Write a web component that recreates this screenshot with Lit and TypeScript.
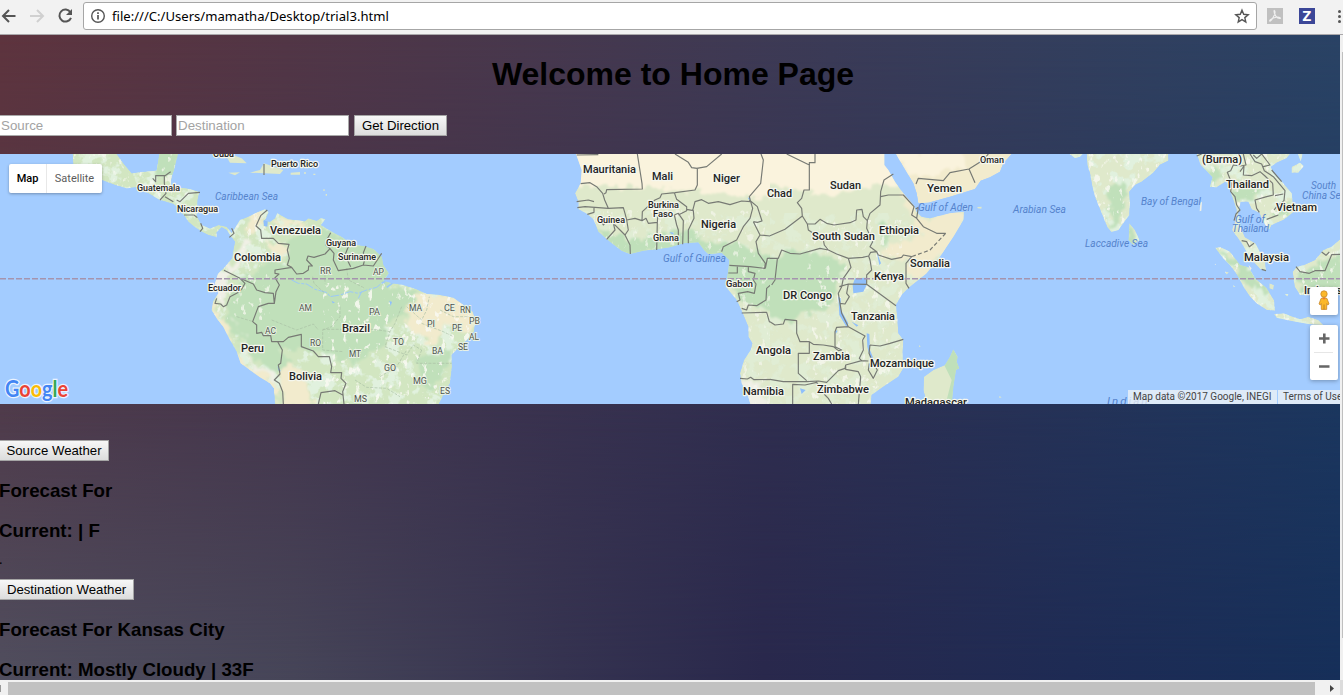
import { LitElement, html, svg, css } from "lit";
import { customElement } from "lit/decorators.js";

type Kind = "country" | "state" | "sea";
// text, left, right, baseline, font size, kind
type Label = [string, number, number, number, number, Kind];

const LABELS: Label[] = [
  ["Cuba", 213, 234, 157, 10, "country"],
  ["Puerto Rico", 271, 318, 167, 9.5, "country"],
  ["Guatemala", 137, 180, 190.5, 9.5, "country"],
  ["Nicaragua", 177, 218, 211.5, 9.5, "country"],
  ["Caribbean Sea", 215, 278, 199.5, 10, "sea"],
  ["Venezuela", 270, 321, 234, 11, "country"],
  ["Guyana", 326, 356, 245.5, 9.5, "country"],
  ["Suriname", 338, 376, 259.5, 9.5, "country"],
  ["Colombia", 234, 281, 261, 11, "country"],
  ["Ecuador", 208, 241, 290.5, 9.5, "country"],
  ["Peru", 241, 264, 352, 11, "country"],
  ["Brazil", 342, 370, 332, 11, "country"],
  ["Bolivia", 289, 322, 380, 11, "country"],
  ["RR", 320, 331, 273.5, 9, "state"],
  ["AP", 373, 384, 274.5, 9, "state"],
  ["AM", 299, 312, 310.500, 9, "state"],
  ["PA", 369, 380, 314.500, 9, "state"],
  ["MA", 409, 422, 310.500, 9, "state"],
  ["CE", 444, 455, 310.500, 9, "state"],
  ["RN", 460, 471, 312.500, 9, "state"],
  ["PI", 427, 435, 326.500, 9, "state"],
  ["PB", 469, 480, 323.500, 9, "state"],
  ["PE", 452, 462, 330.500, 9, "state"],
  ["AL", 469, 479, 339.500, 9, "state"],
  ["SE", 458, 468, 349.500, 9, "state"],
  ["AC", 265, 276, 333.500, 9, "state"],
  ["RO", 310, 321, 345.500, 9, "state"],
  ["MT", 349, 361, 356.500, 9, "state"],
  ["TO", 393, 404, 344.500, 9, "state"],
  ["BA", 432, 443, 353.500, 9, "state"],
  ["GO", 384, 396, 370.500, 9, "state"],
  ["MG", 413, 427, 383.500, 9, "state"],
  ["ES", 440, 450, 393.500, 9, "state"],
  ["MS", 354, 367, 401.500, 9, "state"],
  ["Mauritania", 583, 636, 173, 11, "country"],
  ["Mali", 652, 673, 180, 11, "country"],
  ["Niger", 713, 740, 182, 11, "country"],
  ["Chad", 767, 792, 197, 11, "country"],
  ["Sudan", 830, 861, 189, 11, "country"],
  ["Burkina", 648, 679, 207.5, 9.5, "country"],
  ["Faso", 653, 673, 216.5, 9.5, "country"],
  ["Guinea", 597, 625, 222.5, 9.5, "country"],
  ["Ghana", 653, 679, 240.5, 9.5, "country"],
  ["Nigeria", 701, 736, 228, 11, "country"],
  ["Gulf of Guinea", 663, 726, 261.5, 10, "sea"],
  ["Gabon", 726, 753, 286.5, 9.5, "country"],
  ["South Sudan", 812, 875, 240, 11, "country"],
  ["Ethiopia", 879, 919, 234, 11, "country"],
  ["Somalia", 910, 950, 267, 11, "country"],
  ["Kenya", 874, 904, 280, 11, "country"],
  ["Yemen", 927, 962, 192, 11, "country"],
  ["Oman", 980, 1004, 162.5, 9.5, "country"],
  ["Gulf of Aden", 918, 973, 210.5, 10, "sea"],
  ["DR Congo", 783, 832, 299, 11, "country"],
  ["Tanzania", 851, 895, 320, 11, "country"],
  ["Angola", 756, 791, 354, 11, "country"],
  ["Zambia", 813, 850, 360, 11, "country"],
  ["Mozambique", 870, 934, 367, 11, "country"],
  ["Zimbabwe", 817, 869, 393, 11, "country"],
  ["Namibia", 743, 784, 395, 11, "country"],
  ["Madagascar", 905, 967, 406, 11, "country"],
  ["Arabian Sea", 1013, 1066, 213, 10, "sea"],
  ["Laccadive Sea", 1085, 1148, 247, 10, "sea"],
  ["Bay of Bengal", 1141, 1201, 205, 10, "sea"],
  ["(Burma)", 1202, 1242, 163, 11, "country"],
  ["Thailand", 1226, 1269, 188, 11, "country"],
  ["Vietnam", 1276, 1317, 211, 11, "country"],
  ["Gulf of", 1235, 1265, 222.5, 10, "sea"],
  ["Thailand", 1232, 1269, 231.5, 10, "sea"],
  ["Malaysia", 1244, 1289, 261, 11, "country"],
  ["South", 1311, 1336, 188.5, 10, "sea"],
  ["China Sea", 1302, 1346, 198.5, 10, "sea"],
  ["Indonesia", 1304, 1350, 294, 11, "country"],
];

const AMERICA =
  "M-502 12L-500 50L-450 70L-415 90L-375 105L-340 115L-310 112L-275 130L-240 150L-200 162L-185 175L-165 200L-155 215L-140 228L-115 245L-95 255L-70 262L-70 247L-55 232L-40 240L-25 262L-15 275L-20 300L-24 325L-45 350L-66 372L-75 400L-65 430L-80 452L-85 480L-70 505L-50 530L-30 570L-10 605L2 640L30 660L60 682L90 700L102 715L105 765H595L610 735L630 700L636 650L634 615L655 595L680 570L702 545L706 510L698 485L670 465L640 443L600 435L560 432L530 418L490 405L450 398L430 392L446 370L430 345L425 320L400 297L370 288L340 285L300 258L270 242L243 225L256 208L243 204L230 212L205 205L195 214L145 208L112 190L105 205L90 215L75 212L86 187L75 178L50 188L30 198L0 210L-15 235L-25 250L-40 230L-65 225L-90 236L-115 225L-130 198L-127 150L-122 125L-160 115L-208 112L-205 80L-198 60L-186 12H-242L-250 62L-290 65L-325 70L-350 40L-370 12Z";
const AFRICA_WEST =
  "M48 12L65 60L62 100L45 130L55 155L55 178L78 190L100 208L115 245L150 275L185 302L210 312L250 302L290 298L330 292L370 280L415 277L432 300L445 313L485 308L508 330L505 360L497 410L530 450L548 490L565 530L565 560L577 580L572 600L552 630L540 670L545 700L565 740L572 765H665V12Z";
const AFRICA_EAST =
  "M0 12V765H302L305 735L340 710L385 680L400 655L398 610L400 570L385 550L382 500L378 465L395 435L415 415L470 370L510 320L550 260L580 210L582 185L540 190L480 205L455 200L440 185L430 165L400 130L375 95L355 60L343 45V12Z";
const ARABIA =
  "M378 12L400 50L430 100L440 130L445 160L475 158L540 140L615 117L632 92L660 82L690 65L700 40L725 12Z";
const MADAGASCAR =
  "M550 598L563 620L560 635L568 655L558 660L550 710L545 765H472L460 720L462 680L490 660L525 645L540 620Z";
const INDIA =
  "M50 12L52 45L60 70L66 105L75 140L95 190L112 232L124 246L145 240L165 212L178 195L180 160L178 125L195 105L215 95L250 68L270 44L295 32V12ZM-2 12L15 24L30 20L38 12ZM178 220L195 240L208 270L190 285L176 270Z";
const SE_ASIA =
  "M380 12L392 45L410 62L428 82L420 110L440 112L470 93L485 135L500 180L495 215L486 240L515 280L530 305L545 330L570 356L588 362L585 330L572 310L556 280L525 262L513 235L505 190L512 155L535 155L545 178L568 188L580 215L597 240L605 225L640 210L672 185L665 130L640 100L610 70L602 50L620 38L650 25L660 12ZM665 50L690 38L701 48L685 68L665 68ZM684 12H698L692 34Z";
const INDONESIA =
  "M435 293L452 292L480 305L510 345L535 352L555 385L590 415L612 450L615 482L590 480L560 460L540 440L520 410L505 380L480 345L460 325ZM612 492L640 490L690 508L715 500L745 510L760 525L730 524L660 512L620 503ZM668 365L680 350L700 346L735 330L760 300L785 290L810 268V435H690L674 410ZM572 380L578 385L572 390ZM598 400L612 405L610 420L598 415ZM645 433L655 432L652 440ZM465 365L477 367L470 374ZM490 405L496 410L490 412Z";

const AMERICA_BORDERS =
  "M82 180L62 197L48 228L62 240L65 265L100 265L115 280L147 283L142 300L148 325L142 345L155 352L170 372L190 370L205 360L206 348L217 348L200 330L204 318L222 322L255 312L270 296L258 285L260 270L272 248M155 352L105 360V370L117 372L105 383L118 405L108 425L103 460L85 460M-48 361L0 385L40 402L50 420L75 428L100 430L103 460M0 385L15 400L5 418L-10 430L-30 440L-40 465L-50 470L-58 462L-75 460L-70 445M85 460L55 470L38 515L50 525V550L65 547L70 557L92 556L95 575H130L145 562L184 553V590L220 603L235 620L268 620L275 650L272 668L305 668L303 685L318 700L308 725L312 762M113 575L127 600L122 640L115 645L120 672L103 690L118 700L128 725L130 762M308 735L285 722L243 728L235 762M270 296L282 310L280 330L295 362L340 355L370 345L400 348L425 310M325 290L315 315L332 350M378 288L370 308L375 325L370 345M-120 127L-155 130L-180 155L-190 150M-208 65L-225 77H-253V95L-262 85M-227 77V100L-222 130L-240 150M-225 140L-200 155M-168 195H-138L-128 203M-118 220L-112 235L-120 245M-25 235L-18 250L-32 262M72 42V75";
const STATES =
  "M218 380L222 400L255 430M320 355L325 390L375 415M300 470V500L275 530L248 540V600L310 605M248 538H400L450 545M485 470L465 520L450 545L435 590L500 615L520 585L545 600M500 470L545 510L560 480L568 440M545 600L530 640H635M545 520L610 545L640 560M600 480L640 500H695M420 680L470 650L500 600M345 690L380 712L440 715L480 740M255 360V400M95 510L170 540L220 522L235 540M-10 500L40 515";
const WEST_BORDERS =
  "M50 15L115 14M232 12L246 100L247 117L140 119L138 128L132 132M62 101L90 98L110 110L128 130L134 150L145 175L75 170L52 173M50 155L85 150L102 155M145 175L190 173L195 190L200 210L205 240L195 255L210 285L211 312M102 173V187L82 193M120 205L130 225L152 200M140 268L165 240L160 220L180 240L195 255M200 210L225 205L246 212L247 185L285 150L300 143L305 132L345 128L405 120L412 105V55L395 53L385 37L345 12M410 55L440 50L485 12M246 212L258 205L265 220L292 217L290 300M292 217L293 200L343 195L350 225L355 240V285M343 195L355 190L370 212L368 283M343 128L350 148L380 170V182L355 195M380 178L400 182L402 205L385 240V280M398 182L405 155L425 149L445 160L475 155L510 164L545 153L572 155L578 175L570 205L550 230L530 270L490 290L485 305M572 155L568 140L602 100L610 30L603 12M568 150L592 170L606 213L592 217L580 215M580 215L600 255L588 275L595 310L616 340L614 355L570 350L508 346M600 255L630 258L660 248M505 369H532V350M565 350V365L585 370L580 390L588 402L583 430L563 425L535 430L540 450L530 455M656 323L650 350L643 395L620 415L618 450L590 467L565 465L560 480L545 475M616 355L622 325L656 323M545 489L620 487L628 515L660 525M540 685L562 687L572 682L582 689L660 688";
const EAST_BORDERS =
  "M135 12V38H118V120L102 120L95 145L82 158L95 175L97 198L112 222L135 222L150 208L170 220L192 225L240 218L258 210L260 180L276 178L280 200L292 212L290 235L308 275L300 290L320 305L325 315L365 328L395 322L400 315L425 320L408 340V400L417 415M50 12L118 45M112 222L115 240L160 270L163 285L175 300L150 295L90 312L60 310L35 300L25 325H0M0 257L45 238L97 198M175 300L200 312L235 325L278 322L296 318L302 307L320 305M235 325L243 352L220 385L215 410L205 430L210 460L215 490L235 530L285 558L278 570L280 600L268 625L275 632L295 633M208 410L235 402L290 403L378 467M290 403L290 375L305 360L300 330L296 318M235 402L230 430L238 440L225 462L210 460M22 327L15 390L5 405M292 212L300 190L330 165L332 125L342 90L370 72M332 140L355 135L400 135L432 170L425 195L440 205L460 230L500 250H527M437 177L445 172L440 205M0 515L15 525L40 522L45 508L80 512V550L90 575H118V610H85V670L110 692M118 575L130 583L160 585L190 590L205 602L215 600L195 590V545L200 532L235 530M0 688L40 695H110L145 693L170 697L205 662L225 655L227 645L275 632M227 645V658L265 665L272 680L265 762M68 762V703L105 705L140 697L165 735L175 745L185 762M300 585L330 588L360 580L400 568M300 585L297 610L310 640L322 660L310 685L295 660L298 640M438 102L445 85L520 92L540 68L597 57L640 30L655 12M597 57L615 98";
const ASIA_BORDERS =
  "M380 18L395 12M520 12L528 45L512 48L490 45L482 62L472 67L485 100L482 125L495 140L500 165L510 180L498 192L492 212M510 65L522 48L520 75L545 77L570 65L585 78L608 100L610 135L590 140L555 150L560 175L568 187M540 12L555 35L575 42L583 62L610 80L645 122L642 152L620 170L612 180M550 15L560 25L575 12L600 45L580 50M615 137L640 132M590 208L612 200L625 195M515 272L530 275L538 290L552 280M575 358L588 362M678 350L690 365L718 370L735 362L765 362L785 314L810 313M755 306L768 316L778 306M635 95L605 60";

@customElement("world-map")
export class WorldMap extends LitElement {
  static styles = css`
    :host { display: block; position: relative; height: 250px; overflow: hidden; background: #a3ccff; font-family: Roboto, sans-serif; }
    .canvas { display: block; width: 1340px; height: 250px; }
    .land { fill: #dfe9cb; }
    .lush { fill: #d2e6c1; }
    .grass { fill: #c0e0ba; }
    .sand { fill: #faf3dd; }
    .pale { fill: #f2ebcd; }
    .high { fill: #f0f0e6; }
    .lake { fill: #8fbffb; }
    .river { fill: none; stroke: #9cc8f8; stroke-width: 3; stroke-dasharray: 26 5 9 4; }
    .mouth { stroke-width: 5; stroke-dasharray: none; }
    .border { fill: none; stroke: #777a74; stroke-width: 3.5; stroke-linejoin: round; }
    .dash { stroke-dasharray: 12 7; }
    .statelines { fill: none; stroke: #a9bfa5; stroke-width: 2; stroke-dasharray: 9 4; }
    .equator { stroke: #a594ae; stroke-width: 1.6; stroke-dasharray: 6 2; }
    .country { fill: #242424; font-weight: 500; stroke: #f5f7ee; stroke-width: 2.4px; paint-order: stroke; stroke-linejoin: round; }
    .state { fill: #4f544d; stroke: #e8f1e3; stroke-width: 1.8px; paint-order: stroke; }
    .sea { fill: #5583cc; font-style: italic; }
    .logo { font-family: Lato, sans-serif; font-size: 22px; font-weight: 700; stroke: #eaf3ff; stroke-width: 2.5px; paint-order: stroke; }
    .blue { fill: #4285f4; } .red { fill: #ea4335; } .yellow { fill: #fbbc05; } .green { fill: #34a853; }
    .types { position: absolute; left: 9px; top: 10px; height: 29px; display: flex; background: #fff; border-radius: 2px; box-shadow: 0 1px 3px rgba(0,0,0,.3); font-size: 11px; line-height: 29px; }
    .type { box-sizing: border-box; width: 37px; text-align: center; font-weight: 500; color: #000; }
    .alt { width: 56px; border-left: 1px solid #e8e8e8; color: #5c5c5c; font-weight: 400; }
    .controls { position: absolute; left: 1310px; top: 133px; display: flex; flex-direction: column; gap: 10px; }
    .box { width: 28px; height: 28px; background: #fff; border-radius: 2px; box-shadow: 0 1px 4px rgba(0,0,0,.3); display: block; }
    .zoom { height: 55px; }
    .legal { position: absolute; left: 1128px; bottom: 0; width: 212px; height: 14px; display: flex; overflow: hidden; white-space: nowrap; font-size: 10px; line-height: 14px; color: #444; }
    .credit { background: rgba(245,245,245,.72); padding: 0 5px; width: 139px; flex: none; }
    .terms { background: rgba(245,245,245,.72); margin-left: 1px; padding-left: 5px; flex: none; width: 70px; }
  `;

  render() {
    return html`
      <svg class="canvas" viewBox="0 154 1340 250">
        <defs>
          <clipPath id="cAm"><path d=${AMERICA} /></clipPath>
          <clipPath id="cAw"><path d=${AFRICA_WEST} /></clipPath>
          <clipPath id="cAe"><path d=${AFRICA_EAST} /></clipPath>
          <clipPath id="cAr"><path d=${ARABIA} /></clipPath>
          <clipPath id="cMa"><path d=${MADAGASCAR} /></clipPath>
          <clipPath id="cAs"><path d=${INDIA + SE_ASIA + INDONESIA} /></clipPath>
          <filter id="soft" x="-20%" y="-20%" width="140%" height="140%"><feTurbulence type="fractalNoise" baseFrequency=".035" numOctaves="3" seed="8" /><feDisplacementMap in="SourceGraphic" scale="50" xChannelSelector="R" yChannelSelector="G" /><feGaussianBlur stdDeviation="2.5" /></filter>
          <filter id="cream" x="0" y="0" width="1" height="1"><feTurbulence type="fractalNoise" baseFrequency=".055 .04" numOctaves="3" seed="4" /><feColorMatrix values="0 0 0 0 .95  0 0 0 0 .95  0 0 0 0 .89  9 0 0 0 -5.6" /></filter>
          <filter id="leaf" x="0" y="0" width="1" height="1"><feTurbulence type="fractalNoise" baseFrequency=".025" numOctaves="4" seed="11" /><feColorMatrix values="0 0 0 0 .75  0 0 0 0 .88  0 0 0 0 .73  0 9 0 0 -4.6" /></filter>
        </defs>

        <g transform="translate(240 150) scale(.333333)">
          <g clip-path="url(#cAm)">
            <path class="lush" d=${AMERICA} />
            <rect filter="url(#leaf)" x="-510" y="10" width="1230" height="760" />
            <g filter="url(#soft)">
              <path class="grass" d="M0 395L60 350L80 320L150 350L140 270L250 240L440 300L450 400L530 430L525 480L450 510L440 580L340 640L240 610L110 590L180 660L110 670L20 600L-50 520L-30 440ZM-250 12H-180L-200 85H-255ZM520 620L640 600L610 680L560 730Z" />
              <path class="pale" d="M-90 440L-60 500L10 640L110 700V770L60 740L-60 620ZM20 200L60 190L50 240L20 250ZM80 275L145 285L135 315L90 310ZM540 430L650 440L710 490L690 560L620 520L580 580L490 530L500 480ZM90 210L220 215L130 235ZM130 640L170 650L230 770H130Z" />
              <path class="high" d="M-70 370L-20 340L15 270L30 270L10 330L-30 380L-50 470L-80 440ZM-20 500L-30 490L50 650L110 670L100 690L40 660Z" />
            </g>
            <rect filter="url(#cream)" x="250" y="400" width="450" height="370" opacity=".85" />
            <rect filter="url(#cream)" x="-510" y="10" width="600" height="500" opacity=".7" />
            <path class="river" d="M155 390L175 400L200 402L225 418L262 428L270 440L300 435L330 425L355 430L380 420L410 412L430 395M355 445L365 425" />
            <path class="river mouth" d="M425 400L440 392L452 388M440 412L462 396" />
            <path class="lake" d="M70 212L84 205L82 230L72 228ZM112 648L122 662L118 668ZM448 452L456 456L452 468ZM275 452L285 458L278 460Z" />
          </g>
          <path class="land" d="M-30 12L5 25L20 40L-30 38L-45 12ZM30 68L60 60L72 40L130 60L120 72ZM152 68L180 66V74H152ZM-35 68L0 67L-15 76ZM192 67H198V71H192ZM220 71H226V75H220ZM250 118H254V123H250ZM257 132H261V137H257Z" />
          <path class="statelines" d=${STATES} /><path class="border" d=${AMERICA_BORDERS} />
        </g>

        <g transform="translate(560 150) scale(.333333)">
          <g clip-path="url(#cAw)">
            <path class="land" d=${AFRICA_WEST} />
            <rect filter="url(#leaf)" x="0" y="185" width="665" height="580" opacity=".5" />
            <g filter="url(#soft)">
              <path class="sand" d="M30 -10H680V150L560 140L440 125L300 115L150 108L30 105Z" />
              <path class="grass" d="M110 240L200 265L290 255L380 240L450 275L540 280L600 310L680 320V480L570 480L500 400L440 310L300 310L180 320Z" />
              <path class="high" d="M540 690L600 700L620 770H560Z" />
            </g>
            <rect filter="url(#cream)" x="60" y="180" width="605" height="585" opacity=".6" />
            <path class="lake" d="M563 143L571 143L569 152ZM328 246L342 248L338 254Z" />
          </g>
          <path class="border" d=${WEST_BORDERS} />
        </g>

        <g transform="translate(770 150) scale(.333333)">
          <g clip-path="url(#cAe)">
            <path class="land" d=${AFRICA_EAST} />
            <rect filter="url(#leaf)" x="0" y="190" width="600" height="580" opacity=".5" />
            <g filter="url(#soft)">
              <path class="sand" d="M-20 -10H400L380 110L330 105L200 130L100 125L-20 100Z" />
              <path class="grass" d="M-20 330L60 305L160 310L230 345L200 400L190 470L100 490L60 520L-20 480ZM330 210L370 230L360 280L330 290Z" />
              <path class="pale" d="M400 110L460 210L600 170L560 270L430 400L410 330L330 315L380 270L460 260L400 160Z" />
            </g>
            <rect filter="url(#cream)" x="110" y="210" width="290" height="550" opacity=".7" />
            <path class="lake" d="M255 385L288 383L290 405L280 425L250 430L248 405ZM205 440L212 445L213 480L235 520L230 532L208 495ZM290 550L298 552L300 600L310 625L302 630L292 590ZM320 305L333 340L328 345ZM90 715L107 720L95 732ZM195 540L203 542L197 552ZM245 515L265 526L260 530Z" />
          </g>
          <g clip-path="url(#cAr)"><path class="pale" d=${ARABIA} /><path class="sand" filter="url(#soft)" d="M370 0L590 0L580 50L480 80L420 70Z" /></g>
          <g clip-path="url(#cMa)"><path class="land" d=${MADAGASCAR} /><path class="grass" d="M545 590L580 650L545 770H525L545 690L520 640Z" /></g>
          <path class="land" d="M622 171L635 170L634 176L623 175ZM448 585L452 590L447 591ZM688 738L695 742L688 744Z" />
          <path class="border" d=${EAST_BORDERS} /><path class="border dash" d="M527 250L480 300L425 320" />
        </g>

        <g transform="translate(1070 150) scale(.333333)">
          <g clip-path="url(#cAs)">
            <path class="land" d=${INDIA + SE_ASIA + INDONESIA} />
            <rect filter="url(#leaf)" x="-5" y="10" width="820" height="530" />
            <path class="grass" filter="url(#soft)" d="M110 110L170 100L160 200L120 240ZM380 50L460 60L430 120ZM500 100L600 110L540 150L490 150ZM440 290L520 340L600 430L540 410L490 360ZM680 370L820 310V440H700ZM600 190L660 150L650 210ZM170 210L200 290L170 290Z" />
            <rect filter="url(#cream)" x="-5" y="10" width="820" height="530" opacity=".8" />
          </g>
          <path class="high" d="M391 158L396 155L394 182L389 184ZM434 343L438 341L437 345ZM536 345L545 355L540 362Z" />
          <path class="border" d=${ASIA_BORDERS} />
        </g>

        <line class="equator" x1="0" y1="278.8" x2="1340" y2="278.8" />
        ${LABELS.map(([text, left, right, y, size, kind]) => svg`<text class=${kind} x=${left} y=${y} font-size=${size} textLength=${right - left} lengthAdjust="spacingAndGlyphs">${text}</text>`)}
        <text class="sea" x="1107" y="405" font-size="11.5" letter-spacing="2">Indian</text>
        <text class="logo" x="5" y="397" textLength="63" lengthAdjust="spacingAndGlyphs"><tspan class="blue">G</tspan><tspan class="red">o</tspan><tspan class="yellow">o</tspan><tspan class="blue">g</tspan><tspan class="green">l</tspan><tspan class="red">e</tspan></text>
      </svg>
      <div class="types"><div class="type">Map</div><div class="type alt">Satellite</div></div>
      <div class="controls">
        <svg class="box" viewBox="0 0 28 28">
          <path d="M11 11.5Q14 9.5 17 11.5L19 17L17.6 18L16.7 16.5V22.4H11.3V16.5L10.4 18L9 17Z" fill="#fbb829" stroke="#c9892b" stroke-width=".8" />
          <path d="M14 17.5V22.5" stroke="#b9771f" stroke-width=".8" /><path d="M12.3 10.8L14 12.8L15.7 10.8Z" fill="#f0712c" />
          <circle cx="14" cy="7" r="3.2" fill="#fbb829" stroke="#c9892b" stroke-width=".8" />
        </svg>
        <svg class="box zoom" viewBox="0 0 28 55">
          <path d="M9 13.5H19.5M14.3 8.5V18.5M9 41.5H19.5" stroke="#666" stroke-width="2.6" fill="none" />
          <path d="M4 27.5H23" stroke="#e6e6e6" />
        </svg>
      </div>
      <div class="legal"><span class="credit">Map data ©2017 Google, INEGI</span><span class="terms">Terms of Use</span></div>
    `;
  }
}

@customElement("app-root")
export class AppRoot extends LitElement {
  static styles = css`
    :host { display: flex; flex-direction: column; width: 1343px; height: 695px; overflow: hidden; font-family: "Liberation Sans", Arial, sans-serif; color: #000; }
    .bar { box-sizing: border-box; flex: none; height: 35px; display: flex; align-items: flex-start; background: #f2f2f2; border-bottom: 1px solid #aaa8ab; }
    .nav { flex: none; width: 83px; height: 34px; }
    .address { box-sizing: border-box; flex: none; width: 1174px; height: 28px; margin-top: 2px; display: flex; align-items: center; justify-content: space-between; background: #fff; border: 1px solid #a6a6a6; border-radius: 3px; padding: 0 6px; }
    .where { display: flex; align-items: center; gap: 6px; font: 13.1px/26px "Noto Sans", sans-serif; }
    .info { width: 16px; height: 16px; }
    .star { width: 16px; height: 16px; }
    .extras { flex: none; width: 86px; height: 34px; }
    .z { font: bold 15px "Open Sans", sans-serif; fill: #fff; }
    .body { display: flex; flex: none; height: 645px; }
    .page { position: relative; flex: none; width: 1340px; height: 645px; overflow: hidden; background: linear-gradient(90deg, #5e343e 0, #4c374a 32%, #3b3b57 62%, #2a4365 100%); }
    .shade { position: absolute; inset: 0; }
    .mid { background: linear-gradient(90deg, #4f3747 0, #40334d 28%, #302f50 58%, #1c3860 100%); -webkit-mask-image: linear-gradient(180deg, transparent, #000 62%); mask-image: linear-gradient(180deg, transparent, #000 62%); }
    .low { background: linear-gradient(90deg, #504e5e 0, #464558 22%, #353350 42%, #29284c 57%, #1e2b54 80%, #162f59 100%); -webkit-mask-image: linear-gradient(180deg, transparent 48%, #000 100%); mask-image: linear-gradient(180deg, transparent 48%, #000 100%); }
    .content { position: relative; display: flex; flex-direction: column; }
    h1 { margin: 20px 0 22px 6px; height: 38px; line-height: 38px; text-align: center; font-size: 32px; }
    .form { display: flex; height: 21px; margin-bottom: 18px; }
    .field { box-sizing: border-box; width: 173px; height: 21px; border: 1px solid #a9a9a9; background: #fff; color: #a3a3a3; font-size: 13.33px; line-height: 19px; padding-left: 1px; margin-right: 5px; }
    .first { width: 172px; border-left: 0; margin-right: 4px; }
    .btn { box-sizing: border-box; height: 21px; border: 1px solid #a5a5a5; background: linear-gradient(#f7f7f7, #dcdcdc); font-size: 13.2px; line-height: 19px; padding: 0; text-align: center; white-space: nowrap; }
    .go { width: 93px; }
    .wide { width: 109px; margin-top: 36px; border-left: 0; }
    .dest { width: 134px; border-left: 0; margin-top: 10px; }
    h3 { margin: 19px 0 0 -1px; height: 21px; line-height: 21px; font-size: 18.72px; white-space: nowrap; }
    .dot { margin: 10px 0 0 -1px; height: 18px; font: 14px/18px "Liberation Serif", serif; }
    .vtrack { flex: none; width: 3px; height: 645px; background: #f0f0f0; display: flex; justify-content: flex-end; }
    .vthumb { width: 1px; height: 586px; margin-top: 17px; background: #bfbfbf; }
    .htrack { flex: none; height: 15px; width: 1343px; display: block; }
  `;

  render() {
    return html`
      <div class="bar">
        <svg class="nav" viewBox="0 0 83 34" fill="none" stroke-width="2">
          <path d="M15.5 16H3.5M9 10L3 16L9 22" stroke="#555" />
          <path d="M30 16H42.5M37 10L43 16L37 22" stroke="#d0d0d0" />
          <path d="M70.4 12.2A6 6 0 1 0 71 17.8" stroke="#555" /><path d="M72 9V15H66Z" fill="#555" />
        </svg>
        <div class="address">
          <div class="where">
            <svg class="info" viewBox="0 0 16 16" fill="none" stroke="#555"><circle cx="8" cy="8" r="6.3" stroke-width="1.4" /><path d="M8 7V11.5M8 4.3V5.9" stroke-width="1.7" /></svg>
            <span>file:///C:/Users/mamatha/Desktop/trial3.html</span>
          </div>
          <svg class="star" viewBox="0 0 16 16"><path d="M8 2.2L9.7 6.3L14.2 6.7L10.8 9.6L11.8 14L8 11.6L4.2 14L5.2 9.6L1.8 6.7L6.3 6.3Z" fill="none" stroke="#555" stroke-width="1.4" /></svg>
        </div>
        <svg class="extras" viewBox="1257 0 86 34">
          <rect x="1267" y="8" width="16" height="16" fill="#c0c0c0" />
          <path d="M1274.3 10.5C1275.8 11 1274.8 14.5 1273.2 17.2C1271.5 20.5 1269.8 21.8 1269.6 20.8C1269.6 19.4 1273.5 17.6 1276.5 17.2C1280 16.8 1281.5 18.300 1279.600 18.500C1277 18.500 1274 14.500 1274 11Z" fill="none" stroke="#f0f0f0" stroke-width="1.1" />
          <rect x="1299" y="8" width="16" height="16" fill="#3c4798" />
          <text class="z" x="1302.400" y="21.400">Z</text>
          <g fill="#555"><circle cx="1339.500" cy="11.500" r="1.500" /><circle cx="1339.500" cy="16.500" r="1.500" /><circle cx="1339.500" cy="21.500" r="1.500" /></g>
        </svg>
      </div>
      <div class="body">
        <div class="page">
          <div class="shade mid"></div>
          <div class="shade low"></div>
          <div class="content">
            <h1>Welcome to Home Page</h1>
            <div class="form">
              <div class="field first">Source</div>
              <div class="field">Destination</div>
              <div class="btn go">Get Direction</div>
            </div>
            <world-map></world-map>
            <div class="btn wide">Source Weather</div>
            <h3>Forecast For</h3>
            <h3>Current: | F</h3>
            <div class="dot">.</div>
            <div class="btn dest">Destination Weather</div>
            <h3>Forecast For Kansas City</h3>
            <h3>Current: Mostly Cloudy | 33F</h3>
          </div>
        </div>
        <div class="vtrack"><div class="vthumb"></div></div>
      </div>
      <svg class="htrack" viewBox="0 0 1343 15">
        <rect width="1343" height="15" fill="#f1f1f1" /><rect x="8" y="2" width="1307" height="13" fill="#c1c1c1" />
        <rect y="5" width="1" height="7" fill="#999" /><path d="M1330 5V12L1334 8.500Z" fill="#444" /><rect x="1340" width="3" height="15" fill="#dcdcdc" />
      </svg>
    `;
  }
}
